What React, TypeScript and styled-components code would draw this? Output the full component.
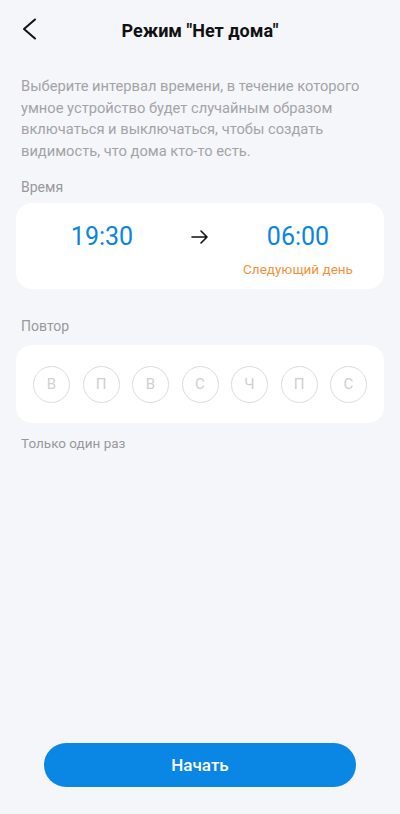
import React from 'react';
import styled, { createGlobalStyle } from 'styled-components';

const GlobalStyle = createGlobalStyle`
  html, body {
    margin: 0;
    padding: 0;
    background: #f5f6fa;
  }
  body {
    font-family: Roboto, "Noto Sans", sans-serif;
  }
`;

const Page = styled.div`
  height: 814px;
  display: flex;
  flex-direction: column;
  background: #f5f6fa;
  box-sizing: border-box;
`;

const Header = styled.div`
  height: 60px;
  display: flex;
  align-items: center;
  justify-content: center;
  position: relative;
`;

const BackButton = styled.div`
  position: absolute;
  left: 20px;
  top: 18px;
  width: 24px;
  height: 24px;
`;

const Title = styled.div`
  font-size: 18px;
  font-weight: 700;
  color: #111;
`;

const Content = styled.div`
  flex: 1;
  padding: 0 16px;
`;

const Description = styled.p`
  margin: 16px 5px 0;
  font-size: 14.7px;
  line-height: 21.5px;
  color: #a3a3a6;
`;

const Label = styled.div<{ $top: number; $bottom: number }>`
  margin: ${({ $top, $bottom }) => `${$top}px 5px ${$bottom}px`};
  font-size: 14px;
  line-height: 20px;
  color: #98989b;
`;

const Card = styled.div`
  background: #fff;
  border-radius: 16px;
`;

const TimeCard = styled(Card)`
  height: 86px;
  display: flex;
  justify-content: center;
  align-items: flex-start;
`;

const TimeCol = styled.div<{ $w: number }>`
  width: ${({ $w }) => $w}px;
  display: flex;
  flex-direction: column;
  align-items: center;
  padding-top: 20px;
`;

const TimeValue = styled.div`
  font-size: 25px;
  line-height: 28px;
  color: #0a84e3;
`;

const NextDay = styled.div`
  margin-top: 10px;
  font-size: 13.5px;
  line-height: 16px;
  color: #f5923a;
  white-space: nowrap;
`;

const DaysCard = styled(Card)`
  height: 78px;
  display: flex;
  align-items: center;
  justify-content: space-between;
  padding: 0 17px;
  box-sizing: border-box;
`;

const Day = styled.div`
  width: 37px;
  height: 37px;
  box-sizing: border-box;
  border: 1.5px solid #dcdce0;
  border-radius: 50%;
  display: flex;
  align-items: center;
  justify-content: center;
  font-size: 15px;
  color: #cfcfd3;
`;

const Hint = styled.div`
  margin: 10px 5px 0;
  font-size: 13.5px;
  line-height: 20px;
  color: #98989b;
`;

const Footer = styled.div`
  padding: 0 44px 27px;
`;

const StartButton = styled.button`
  width: 100%;
  height: 44px;
  border: none;
  border-radius: 22px;
  background: #0a87e4;
  color: #fff;
  font-family: Roboto, "Noto Sans", sans-serif;
  font-size: 17px;
  font-weight: 500;
`;

const days = ['В', 'П', 'В', 'С', 'Ч', 'П', 'С'];

export default function App() {
  return (
    <Page>
      <GlobalStyle />
      <Header>
        <BackButton>
          <svg width="24" height="24" viewBox="0 0 24 24" fill="none">
            <path d="M15 1.5L4 11L15 20.5" stroke="#111" strokeWidth="2" strokeLinecap="round" strokeLinejoin="round" />
          </svg>
        </BackButton>
        <Title>Режим "Нет дома"</Title>
      </Header>
      <Content>
        <Description>
          Выберите интервал времени, в течение которого умное устройство будет случайным образом включаться и выключаться, чтобы создать видимость, что дома кто-то есть.
        </Description>
        <Label $top={15} $bottom={6}>Время</Label>
        <TimeCard>
          <TimeCol $w={120}>
            <TimeValue>19:30</TimeValue>
          </TimeCol>
          <TimeCol $w={76}>
            <svg width="20" height="28" viewBox="0 0 20 28" fill="none">
              <path d="M2 14H17M11 8L17 14L11 20" stroke="#111" strokeWidth="1.6" strokeLinecap="round" strokeLinejoin="round" />
            </svg>
          </TimeCol>
          <TimeCol $w={120}>
            <TimeValue>06:00</TimeValue>
            <NextDay>Следующий день</NextDay>
          </TimeCol>
        </TimeCard>
        <Label $top={27} $bottom={9}>Повтор</Label>
        <DaysCard>
          {days.map((d, i) => (
            <Day key={i}>{d}</Day>
          ))}
        </DaysCard>
        <Hint>Только один раз</Hint>
      </Content>
      <Footer>
        <StartButton>Начать</StartButton>
      </Footer>
    </Page>
  );
}
